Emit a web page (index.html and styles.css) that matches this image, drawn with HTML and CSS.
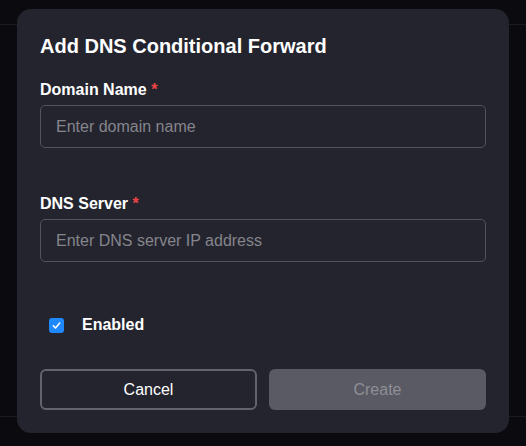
FILE: index.html
```html
<!DOCTYPE html>
<html lang="en">
  <head>
    <meta charset="UTF-8" />
    <meta name="viewport" content="width=device-width, initial-scale=1.0" />
    <title>DNS Conditional Forwards</title>
    <link rel="stylesheet" href="styles.css">
  </head>
  <body>
    <div class="page">
      <div class="topbar"></div>
      <div class="page-body"></div>
      <div class="footer"></div>
    </div>

    <!-- Modal Dialog -->
    <div class="overlay">
      <div class="modal">
        <h2>Add DNS Conditional Forward</h2>
        <form>
          <div class="field">
            <label for="domain-name">Domain Name <span class="required">*</span></label>
            <input type="text" id="domain-name" placeholder="Enter domain name" />
          </div>
          <div class="field">
            <label for="dns-server">DNS Server <span class="required">*</span></label>
            <input type="text" id="dns-server" placeholder="Enter DNS server IP address" />
          </div>
          <label class="check-row">
            <span class="checkbox">
              <svg width="11" height="11" viewBox="0 0 12 12">
                <path d="M2.5 6.3l2.4 2.4 4.6-5.4" fill="none" stroke="#fff" stroke-width="1.7" stroke-linecap="round" stroke-linejoin="round" />
              </svg>
            </span>
            Enabled
          </label>
          <div class="actions">
            <button type="button" class="btn-cancel">Cancel</button>
            <button type="button" class="btn-create" disabled>Create</button>
          </div>
        </form>
      </div>
    </div>
  </body>
</html>
```

FILE: styles.css
```css
/* General Body Styling */
body {
  font-family: "Liberation Sans", Arial, sans-serif;
  background-color: #0b0b0f;
  margin: 0;
  padding: 0;
  height: 100vh;
  overflow: hidden;
}

/* Page behind the dialog */
.page {
  display: flex;
  flex-direction: column;
  height: 100vh;
}

.topbar {
  height: 24px;
  border-bottom: 1px solid #1b1b21;
}

.page-body {
  flex: 1;
}

.footer {
  height: 29px;
  border-top: 1px solid #1b1b21;
}

/* Modal Styling */
.overlay {
  position: fixed;
  inset: 0;
  display: flex;
  justify-content: center;
  align-items: flex-start;
  padding-top: 9px;
}

.modal {
  background-color: #24242e;
  border-radius: 14px;
  width: 446px;
  padding: 23px;
  color: #ffffff;
}

.modal h2 {
  font-size: 20px;
  line-height: 28px;
  margin: 0 0 20px;
}

/* Form Styling */
form {
  display: flex;
  flex-direction: column;
}

.field {
  display: flex;
  flex-direction: column;
  margin-bottom: 46px;
}

.field label {
  font-size: 16px;
  font-weight: bold;
  line-height: 20px;
  margin-bottom: 5px;
}

.required {
  color: #ef4444;
}

.field input {
  font-family: inherit;
  font-size: 16px;
  height: 43px;
  box-sizing: border-box;
  padding: 0 15px;
  border: 1px solid #53535c;
  border-radius: 5px;
  background-color: #24242e;
  color: #ffffff;
}

.field input::placeholder {
  color: #85858c;
}

.field input:focus {
  outline: none;
  border-color: #1e88ff;
}

/* Checkbox Row */
.check-row {
  display: flex;
  align-items: center;
  gap: 18px;
  padding-left: 9px;
  margin-top: 5px;
  font-size: 16px;
  font-weight: bold;
  line-height: 24px;
}

.checkbox {
  width: 15px;
  height: 15px;
  border-radius: 3px;
  background-color: #1e88ff;
  display: flex;
  align-items: center;
  justify-content: center;
}

/* Button Styling */
.actions {
  display: grid;
  grid-template-columns: 1fr 1fr;
  gap: 12px;
  margin-top: 32px;
}

.actions button {
  font-family: inherit;
  font-size: 16px;
  height: 41px;
  border-radius: 6px;
  cursor: pointer;
}

.btn-cancel {
  background-color: #24242e;
  color: #ffffff;
  border: 2px solid #63636b;
}

.btn-create {
  background-color: #5a5a64;
  color: #8e8e95;
  border: none;
}

.btn-create:disabled {
  cursor: not-allowed;
}
```
